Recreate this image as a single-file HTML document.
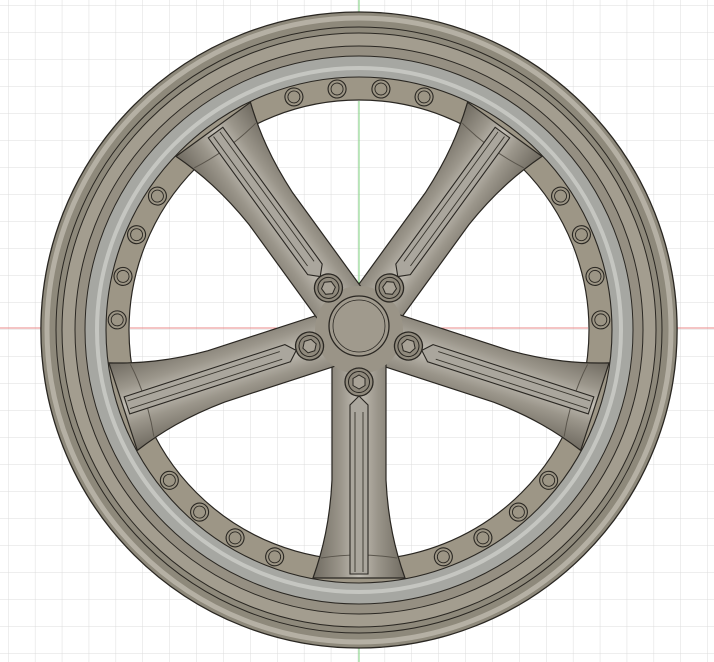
<!DOCTYPE html>
<html><head><meta charset="utf-8"><style>html,body{margin:0;padding:0;background:#fff;width:714px;height:662px;overflow:hidden}</style></head>
<body>
<svg width="714" height="662" viewBox="0 0 714 662" xmlns="http://www.w3.org/2000/svg">
<defs>
<pattern id="grid" x="8" y="5" width="26.9" height="27" patternUnits="userSpaceOnUse">
<path d="M0 0V27M0 0H26.9" stroke="#dcdcdc" stroke-width="1" fill="none"/>
</pattern>
<linearGradient id="sp" x1="0" x2="1" y1="0" y2="0">
<stop offset="0" stop-color="#6f6a60"/><stop offset="0.3" stop-color="#9b968b"/><stop offset="0.5" stop-color="#c2beb5"/><stop offset="0.7" stop-color="#9b968b"/><stop offset="1" stop-color="#6f6a60"/>
</linearGradient>
<g id="spoke">
<path d="M-27,-30 L-27,-150 C-29,-190 -36,-220 -46,-248 L46,-248 C36,-220 29,-190 27,-150 L27,-30 Z" fill="url(#sp)" stroke="#2a2722" stroke-width="1.2"/>
<path d="M-38,-228 Q0,-222 38,-228" fill="none" stroke="#5a554c" stroke-width="1"/>
<path d="M-9,-75 L-9,-244 L9,-244 L9,-75 L0,-66 Z" fill="#aaa69d" stroke="#2a2722" stroke-width="1.1"/>
<path d="M-4,-82 L-4,-242 M4,-82 L4,-242" stroke="#3a372f" stroke-width="0.9"/>
</g>
<g id="bolt">
<circle cx="0" cy="-242" r="9" fill="#9c9585" stroke="#2a2722" stroke-width="1.1"/>
<circle cx="0" cy="-242" r="6" fill="none" stroke="#2a2722" stroke-width="0.9"/>
</g>
<g id="nut">
<circle cx="0" cy="-52" r="14" fill="#8f897c" stroke="#2a2722" stroke-width="1.3"/>
<circle cx="0" cy="-52" r="10.5" fill="none" stroke="#2a2722" stroke-width="1"/>
<polygon points="0,-59 6,-55.5 6,-48.5 0,-45 -6,-48.5 -6,-55.5" fill="#a8a296" stroke="#2a2722" stroke-width="1"/>
</g>
</defs>
<rect width="714" height="662" fill="url(#grid)"/>
<line x1="0" y1="328" x2="714" y2="328" stroke="#e88a8a" stroke-width="1"/>
<line x1="359" y1="0" x2="359" y2="662" stroke="#7fd47f" stroke-width="1"/>
<g transform="translate(359,330)">
<path d="M0,-318A318,318 0 1 1 0,318A318,318 0 1 1 0,-318ZM0,-230A230,230 0 1 0 0,230A230,230 0 1 0 0,-230Z" fill-rule="evenodd" fill="#8e897b" stroke="#2a2722" stroke-width="1.3"/>
<circle r="312" fill="none" stroke="#b5b0a4" stroke-width="5"/>
<circle r="303" fill="none" stroke="#2a2722" stroke-width="1"/>
<circle r="297" fill="#a39d8f" stroke="#2a2722" stroke-width="1"/>
<circle r="284" fill="#958f82" stroke="#2a2722" stroke-width="1"/>
<circle r="274" fill="#a6a7a2" stroke="#2a2722" stroke-width="1"/>
<circle r="262" fill="none" stroke="#c5c6c1" stroke-width="4"/>
<circle r="253" fill="#9d9686" stroke="#2a2722" stroke-width="1.1"/>
<circle r="230" fill="#fff" stroke="#2a2722" stroke-width="1.2"/>
</g>
<clipPath id="c"><circle cx="359" cy="330" r="229"/></clipPath>
<rect x="129" y="100" width="460" height="460" fill="url(#grid)" clip-path="url(#c)"/>
<line x1="130" y1="328" x2="588" y2="328" stroke="#e88a8a" stroke-width="1"/>
<line x1="359" y1="101" x2="359" y2="559" stroke="#7fd47f" stroke-width="1"/>
<g transform="translate(359,330)">
<g transform="rotate(-5.2)"><use href="#bolt"/></g><g transform="rotate(5.2)"><use href="#bolt"/></g><g transform="rotate(-15.6)"><use href="#bolt"/></g><g transform="rotate(15.6)"><use href="#bolt"/></g>
<g transform="rotate(66.8)"><use href="#bolt"/></g><g transform="rotate(77.2)"><use href="#bolt"/></g><g transform="rotate(56.4)"><use href="#bolt"/></g><g transform="rotate(87.6)"><use href="#bolt"/></g>
<g transform="rotate(138.8)"><use href="#bolt"/></g><g transform="rotate(149.2)"><use href="#bolt"/></g><g transform="rotate(128.4)"><use href="#bolt"/></g><g transform="rotate(159.6)"><use href="#bolt"/></g>
<g transform="rotate(210.8)"><use href="#bolt"/></g><g transform="rotate(221.2)"><use href="#bolt"/></g><g transform="rotate(200.4)"><use href="#bolt"/></g><g transform="rotate(231.6)"><use href="#bolt"/></g>
<g transform="rotate(282.8)"><use href="#bolt"/></g><g transform="rotate(293.2)"><use href="#bolt"/></g><g transform="rotate(272.4)"><use href="#bolt"/></g><g transform="rotate(303.6)"><use href="#bolt"/></g>
<g transform="rotate(36)"><use href="#spoke"/></g>
<g transform="rotate(108)"><use href="#spoke"/></g>
<g transform="rotate(180)"><use href="#spoke"/></g>
<g transform="rotate(252)"><use href="#spoke"/></g>
<g transform="rotate(324)"><use href="#spoke"/></g>
<circle r="44" fill="#9a9487"/>
<g transform="rotate(36)"><use href="#nut"/></g>
<g transform="rotate(108)"><use href="#nut"/></g>
<g transform="rotate(180)"><use href="#nut"/></g>
<g transform="rotate(252)"><use href="#nut"/></g>
<g transform="rotate(324)"><use href="#nut"/></g>
<circle cy="-4" r="30" fill="#a09a8d" stroke="#2a2722" stroke-width="1.3"/>
<circle cy="-4" r="26" fill="none" stroke="#2a2722" stroke-width="0.8"/>
</g>
</svg>
</body></html>
